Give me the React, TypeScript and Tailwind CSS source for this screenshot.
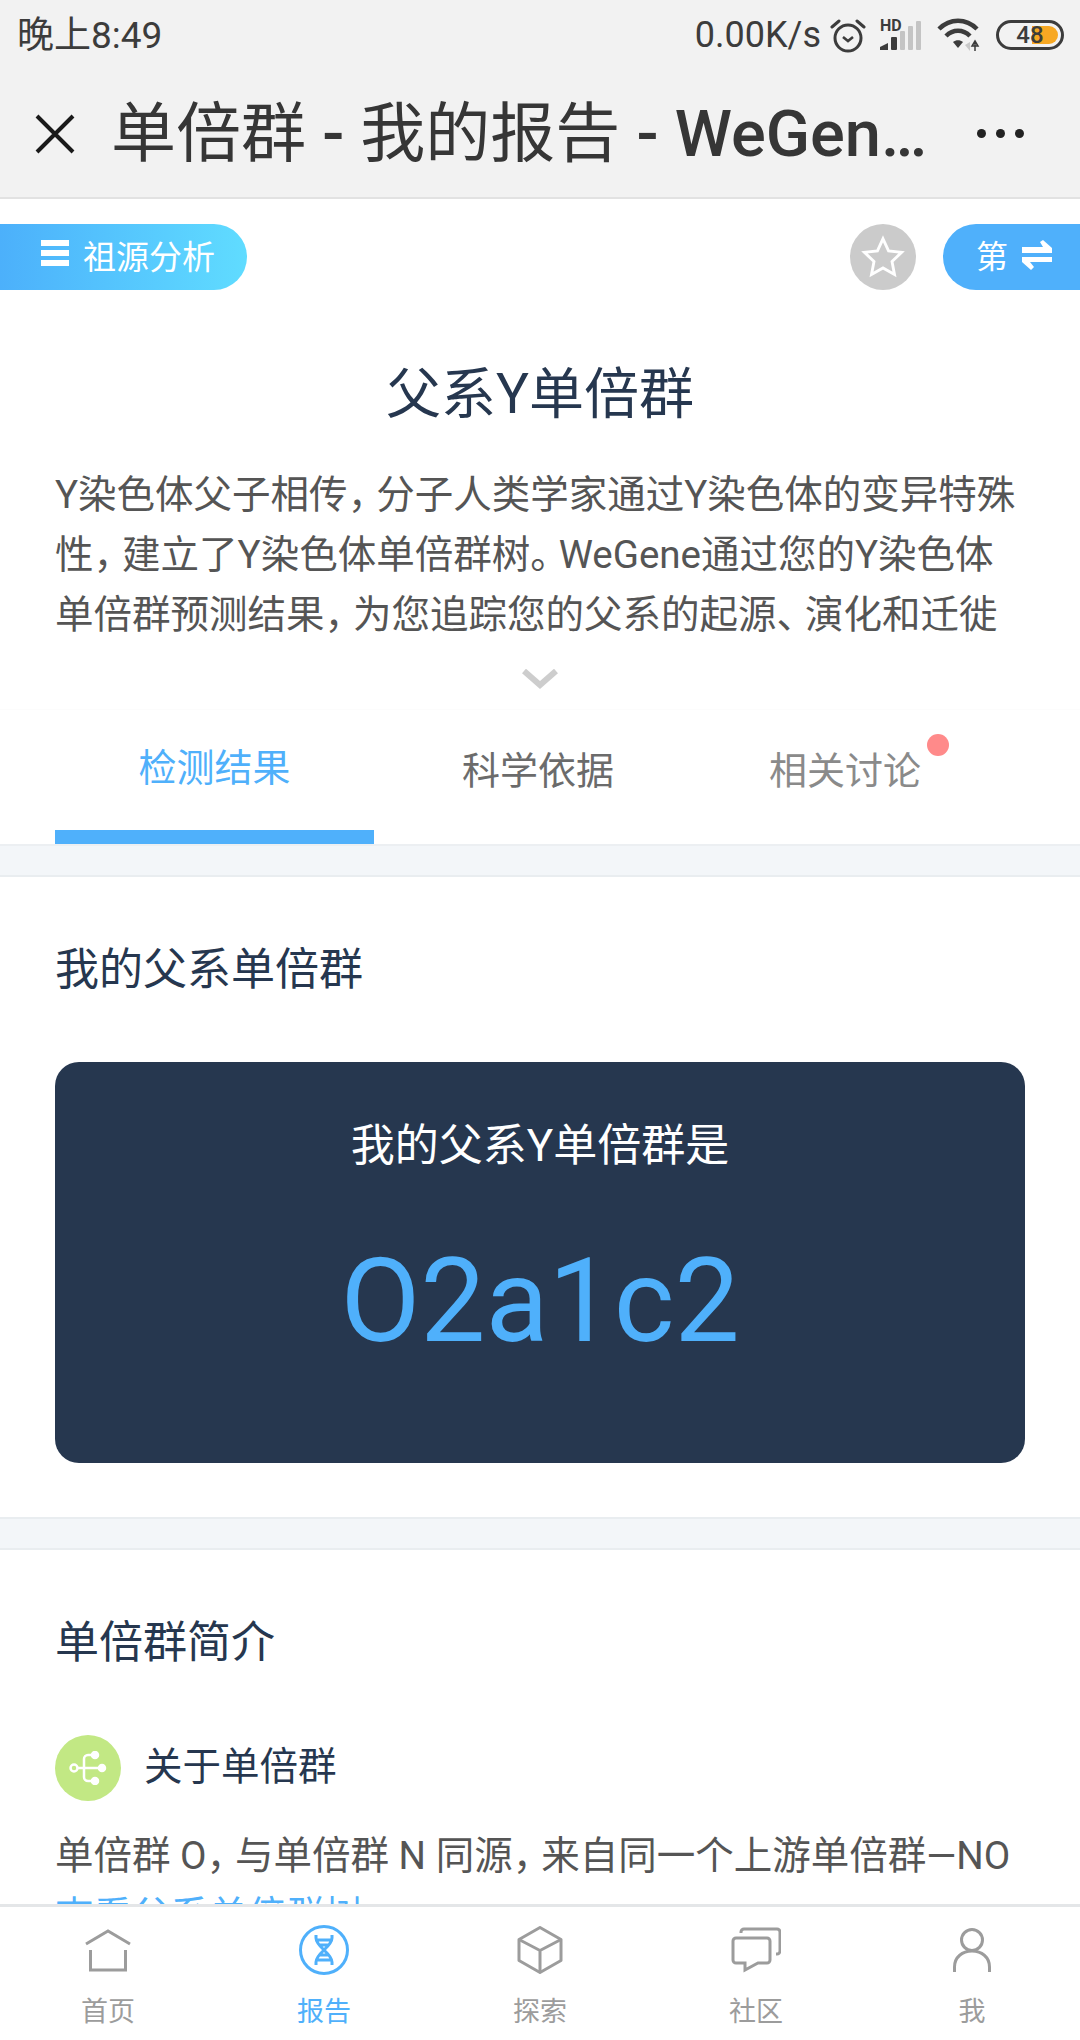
import type { ReactNode } from "react";

const fontStack = "font-['Roboto','Noto_Sans_CJK_SC',sans-serif]";

const introLines = [
  "Y染色体父子相传，分子人类学家通过Y染色体的变异特殊",
  "性，建立了Y染色体单倍群树。WeGene通过您的Y染色体",
  "单倍群预测结果，为您追踪您的父系的起源、演化和迁徙",
];

// the screenshot sets CJK punctuation tighter than a full em
function TightText({ text }: { text: string }) {
  return (
    <>
      {text.split(/([，、。])/).map((part, i) =>
        i % 2 === 1 ? (
          <span key={i} className="tracking-[-10px]">{part}</span>
        ) : (
          <span key={i}>{part}</span>
        ),
      )}
    </>
  );
}

function AlarmIcon() {
  return (
    <svg width="36" height="36" viewBox="0 0 36 36" fill="none" stroke="#3c3c3c" strokeWidth="3">
      <circle cx="18" cy="21" r="13" />
      <path d="M13 20l5 4 5-4" strokeWidth="2.6" />
      <path d="M2 10l7-6M34 10l-7-6" strokeLinecap="round" />
    </svg>
  );
}

function SignalIcon() {
  return (
    <div className="flex h-[32px] w-[42px]">
      <span className="w-[1px] text-[16px] leading-[13px] font-bold text-[#3c3c3c]">HD</span>
      <svg className="ml-[-1px]" width="42" height="32" viewBox="0 0 42 32">
        <path d="M0 31v-3l8-4v7z" fill="#3c3c3c" />
        <rect x="11" y="18" width="6" height="13" rx="1" fill="#3c3c3c" />
        <rect x="20" y="12" width="5" height="19" rx="1" fill="#c4c4c4" />
        <rect x="28" y="7" width="5" height="24" rx="1" fill="#c4c4c4" />
        <rect x="36" y="2" width="5" height="29" rx="1" fill="#c4c4c4" />
      </svg>
    </div>
  );
}

function WifiIcon() {
  return (
    <svg width="44" height="36" viewBox="0 0 44 36" fill="none">
      <path d="M2 12C13 1 29 1 40 12" stroke="#3c3c3c" strokeWidth="4.5" />
      <path d="M9 19c7-7 17-7 24 0" stroke="#3c3c3c" strokeWidth="4.5" />
      <path d="M16 25c3-2.500 7-2.500 10 0l-5 6z" fill="#3c3c3c" />
      <path d="M33 25v9l-5-6z" fill="#c9c9c9" />
      <path d="M38 24v10M38 24l3 5h-6z" stroke="#3c3c3c" strokeWidth="1.500" />
    </svg>
  );
}

function Battery() {
  return (
    <div className="relative flex h-[30px] w-[68px] items-center rounded-full border-[3px] border-[#3c3c3c]">
      <div className="absolute bottom-[3px] left-[33px] right-[3px] top-[3px] rounded-r-full bg-[#f7a823]" />
      <span className="relative w-full text-center text-[24px] leading-none font-medium text-[#3c3c3c]">48</span>
    </div>
  );
}

function StatusBar() {
  return (
    <div className="flex h-[70px] items-center justify-between pl-[17px] pr-[16px] text-[#3c3c3c]">
      <span className="text-[37px] leading-none">晚上8:49</span>
      <div className="flex items-center">
        <span className="text-[36px] leading-none">0.00K/s</span>
        <div className="ml-[9px]"><AlarmIcon /></div>
        <div className="ml-[14px]"><SignalIcon /></div>
        <div className="ml-[15px]"><WifiIcon /></div>
        <div className="ml-[15px]"><Battery /></div>
      </div>
    </div>
  );
}

function ToolBar() {
  return (
    <div className="flex h-[129px] items-center border-b-2 border-[#e2e2e2]">
      <svg className="ml-[35px] shrink-0" width="40" height="40" viewBox="0 0 40 40" stroke="#1a1a1a" strokeWidth="4" fill="none">
        <path d="M2 2l36 36M38 2L2 38" />
      </svg>
      <div className="ml-[36px] w-[812px] whitespace-nowrap text-[65px] leading-[84px] text-[#363636]">
        单倍群 <span className="font-medium">-</span> 我的报告 <span className="font-medium">- WeGen…</span>
      </div>
      <div className="ml-[54px] flex gap-[10px]">
        <span className="h-[9px] w-[9px] rounded-full bg-[#222]" />
        <span className="h-[9px] w-[9px] rounded-full bg-[#222]" />
        <span className="h-[9px] w-[9px] rounded-full bg-[#222]" />
      </div>
    </div>
  );
}

function ActionRow() {
  return (
    <div className="mt-[25px] flex h-[66px] items-center">
      <div className="flex h-[66px] w-[247px] items-center rounded-r-full bg-gradient-to-r from-[#4cb0fb] to-[#60dcff] pl-[41px] text-white">
        <div className="mb-[9px] flex w-[28px] flex-col gap-[4px]">
          <span className="h-[6px] bg-white" />
          <span className="h-[6px] bg-white" />
          <span className="h-[6px] bg-white" />
        </div>
        <span className="ml-[14px] text-[33px] leading-none">祖源分析</span>
      </div>
      <div className="ml-auto flex h-[66px] w-[66px] items-center justify-center rounded-full bg-[#cbcbcb]">
        <svg width="46" height="46" viewBox="0 0 24 24" fill="none" stroke="#fff" strokeWidth="1.500">
          <path d="M12 2.500l2.900 6.300 6.800.8-5 4.700 1.300 6.800-6-3.400-6 3.400 1.300-6.800-5-4.700 6.800-.8z" />
        </svg>
      </div>
      <div className="ml-[27px] flex h-[66px] w-[137px] items-center rounded-l-full bg-[#4fb0fb] pl-[33px] text-white">
        <span className="text-[32px] leading-none">第</span>
        <svg className="mb-[4px] ml-[14px]" width="30" height="30" viewBox="0 0 30 30" fill="#fff">
          <path d="M0 7h21l-3-5 3-2 9 8v5H0zM30 17H0v5l9 8 3-3-4-5h22z" />
        </svg>
      </div>
    </div>
  );
}

function Intro() {
  return (
    <div>
      <h1 className="mt-[68px] text-center text-[55px] leading-[72px] font-normal text-[#26374f]">父系Y单倍群</h1>
      <div className="mt-[35px] px-[55px] text-[38.5px] leading-[60px] text-[#555]">
        {introLines.map((line) => (
          <div key={line} className="whitespace-nowrap"><TightText text={line} /></div>
        ))}
      </div>
      <div className="mt-[24px] flex justify-center">
        <svg width="36" height="20" viewBox="0 0 36 20" fill="none" stroke="#cdcdcd" strokeWidth="6">
          <path d="M2 2l16 14L34 2" />
        </svg>
      </div>
    </div>
  );
}

function Tabs() {
  return (
    <div className="relative mt-[20px] flex h-[137px] border-t border-b-2 border-t-[#fcfcfc] border-b-[#eceff2]">
      <div className="relative ml-[55px] flex w-[319px] justify-center pt-[32px] text-[38px] leading-[52px] text-[#4fb0fb]">
        检测结果
        <span className="absolute bottom-0 left-0 right-0 h-[14px] bg-[#4fb0fb]" />
      </div>
      <div className="ml-[88px] pt-[35px] text-[38px] leading-[52px] text-[#6b6b6b]">科学依据</div>
      <div className="relative ml-[155px] pt-[35px] text-[38px] leading-[52px] text-[#8a8a8a]">
        相关讨论
        <span className="absolute right-[-28px] top-[24px] h-[22px] w-[22px] rounded-full bg-[#ff8a8a]" />
      </div>
    </div>
  );
}

function Band() {
  return <div className="h-[31px] border-b-2 border-[#e9edf0] bg-[#f3f6f9]" />;
}

function SectionTitle({ children }: { children: ReactNode }) {
  return <h2 className="text-[44px] leading-[60px] font-normal text-[#26374f]">{children}</h2>;
}

function BottomNav() {
  const items = [
    {
      label: "首页",
      icon: (
        <svg width="46" height="43" viewBox="0 0 46 43" fill="none" stroke="#9c9c9c" strokeWidth="3">
          <path d="M1 15L23 2l22 13" />
          <path d="M5.500 21v20h35V21" />
        </svg>
      ),
    },
    {
      label: "报告",
      active: true,
      icon: (
        <svg width="50" height="50" viewBox="0 0 50 50" fill="none" stroke="#4fb0fb" strokeWidth="3">
          <circle cx="25" cy="25" r="23.500" />
          <path d="M17 10v3c0 9 16 15 16 24v3M33 10v3c0 9-16 15-16 24v3M17 15h16M21 20h8M21 30h8M17 35h16" />
        </svg>
      ),
    },
    {
      label: "探索",
      icon: (
        <svg width="46" height="48" viewBox="0 0 46 48" fill="none" stroke="#9c9c9c" strokeWidth="3" strokeLinejoin="round">
          <path d="M23 1.500l21 12v21l-21 12-21-12v-21z" />
          <path d="M2 13.500l21 11 21-11M23 24.500v22" />
        </svg>
      ),
    },
    {
      label: "社区",
      icon: (
        <svg width="50" height="46" viewBox="0 0 50 46" fill="none" stroke="#9c9c9c" strokeWidth="3">
          <path d="M10 6V5a3 3 0 0 1 3-3h33a3 3 0 0 1 3 3v19a3 3 0 0 1-3 3h-1" />
          <path d="M5 11h31a3 3 0 0 1 3 3v19a3 3 0 0 1-3 3H27L14 43v-7H5a3 3 0 0 1-3-3V14a3 3 0 0 1 3-3z" />
        </svg>
      ),
    },
    {
      label: "我",
      icon: (
        <svg width="38" height="44" viewBox="0 0 38 44" fill="none" stroke="#9c9c9c" strokeWidth="3">
          <circle cx="19" cy="12" r="10.500" />
          <path d="M1.500 44v-5c0-10 8-16 17.500-16s17.500 6 17.500 16v5" />
        </svg>
      ),
    },
  ];
  return (
    <div className="absolute inset-x-0 bottom-0 flex h-[136px] border-t-[3px] border-[#e4e6e8] bg-white">
      {items.map((item) => (
        <div key={item.label} className="flex flex-1 flex-col items-center">
          <div className="flex h-[86px] items-center">{item.icon}</div>
          <span className={`mt-[1px] text-[27px] leading-[36px] ${item.active ? "text-[#4fb0fb]" : "text-[#9c9c9c]"}`}>
            {item.label}
          </span>
        </div>
      ))}
    </div>
  );
}

export default function App() {
  return (
    <div className={`relative h-[2040px] w-[1080px] overflow-hidden bg-white ${fontStack}`}>
      <div className="bg-[#f2f2f2]">
        <StatusBar />
        <ToolBar />
      </div>
      <ActionRow />
      <Intro />
      <Tabs />
      <Band />
      <section className="px-[55px] pt-[63px] pb-[54px]">
        <SectionTitle>我的父系单倍群</SectionTitle>
        <div className="mt-[62px] flex h-[401px] flex-col items-center rounded-[24px] bg-[#26374f]">
          <div className="mt-[56px] text-[44px] leading-[56px] text-white">我的父系Y单倍群是</div>
          <div className="mt-[62px] text-[116px] leading-[130px] text-[#4fb0fb]">O2a1c2</div>
        </div>
      </section>
      <div className="border-t-2 border-[#e9edf0]">
        <Band />
      </div>
      <section className="px-[55px] pt-[63px]">
        <SectionTitle>单倍群简介</SectionTitle>
        <div className="mt-[62px] flex items-center">
          <div className="flex h-[66px] w-[66px] items-center justify-center rounded-full bg-[#c2e884]">
            <svg width="38" height="34" viewBox="0 0 38 34" fill="none" stroke="#fff" strokeWidth="2.500">
              <circle cx="5" cy="17" r="3.500" />
              <path d="M9 17h22M26 4h-7a4 4 0 0 0-4 4v18a4 4 0 0 0 4 4h7" />
              <circle cx="26" cy="4" r="3" fill="#fff" />
              <circle cx="33" cy="17" r="3" fill="#fff" />
              <circle cx="26" cy="30" r="3" fill="#fff" />
            </svg>
          </div>
          <span className="ml-[23px] pb-[3px] text-[38.5px] leading-[52px] text-[#26374f]">关于单倍群</span>
        </div>
        <div className="mt-[25px] whitespace-nowrap text-[38.5px] leading-[60px] text-[#555]">
          <TightText text="单倍群 O，与单倍群 N 同源，来自同一个上游单倍群—NO" />
        </div>
        <div className="whitespace-nowrap text-[38.5px] leading-[60px] text-[#4fb0fb]">查看父系单倍群树</div>
      </section>
      <BottomNav />
    </div>
  );
}
